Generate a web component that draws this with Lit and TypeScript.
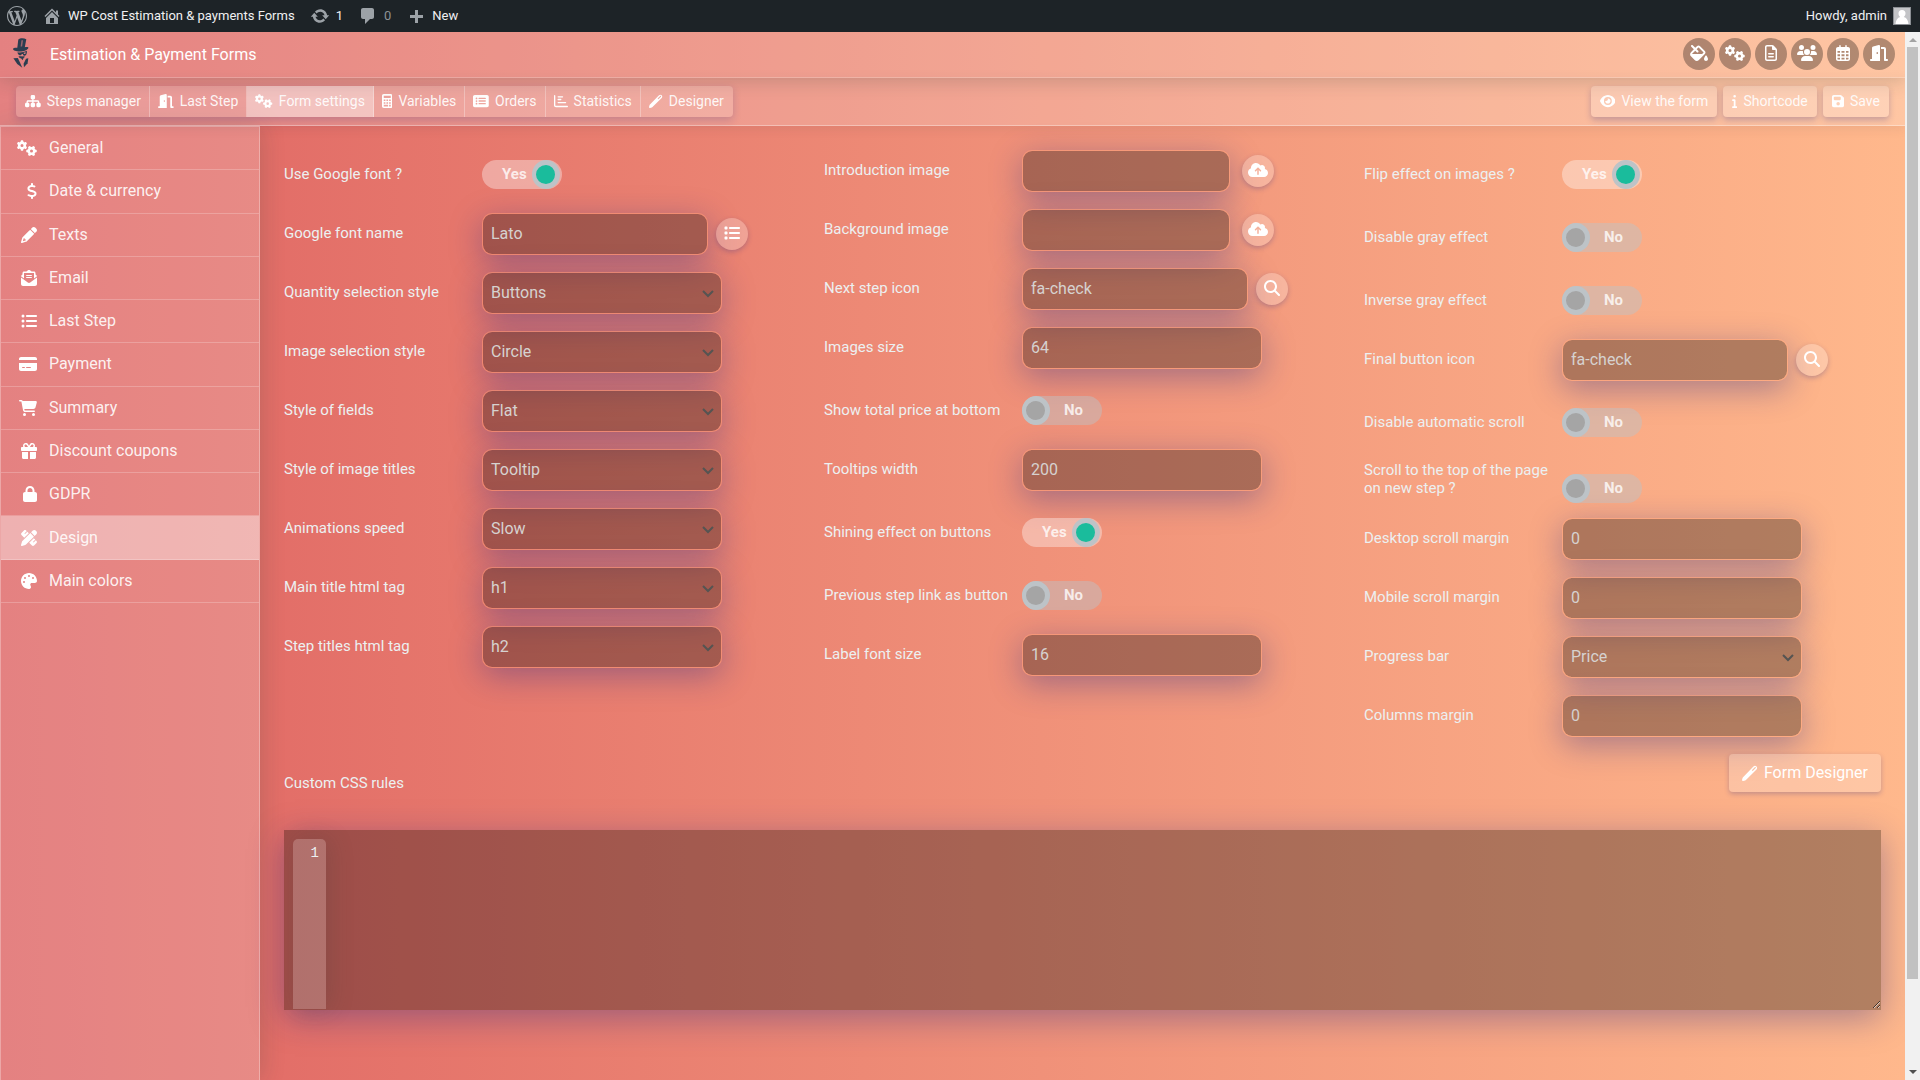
import { LitElement, html, svg, css, nothing } from "lit";
import { customElement, property } from "lit/decorators.js";
import { classMap } from "lit/directives/class-map.js";

interface Glyph {
  w: number;
  h?: number;
  d: string;
  evenOdd?: boolean;
}

const GEAR =
  "M308.5 135.3c7.1-6.3 9.9-16.2 6.2-25c-2.3-5.3-4.8-10.5-7.6-15.5L304 89.4c-3-5-6.3-9.9-9.8-14.6c-5.7-7.6-15.7-10.1-24.7-7.1l-28.2 9.3c-10.7-8.8-23-16-36.2-20.9L199 27.1c-1.9-9.3-9.1-16.7-18.5-17.8C173.9 8.4 167.2 8 160.4 8h-.7c-6.8 0-13.5 .4-20.1 1.2c-9.4 1.1-16.6 8.6-18.5 17.8L115 56.1c-13.3 5-25.5 12.1-36.2 20.9L50.5 67.8c-9-3-19-.5-24.7 7.1c-3.5 4.7-6.8 9.6-9.9 14.6l-3 5.3c-2.8 5-5.3 10.2-7.6 15.6c-3.7 8.7-.9 18.6 6.2 25l22.2 19.8C32.6 161.9 32 168.9 32 176s.6 14.1 1.7 20.9L11.5 216.7c-7.1 6.3-9.9 16.2-6.2 25c2.3 5.3 4.8 10.5 7.6 15.6l3 5.2c3 5.1 6.3 9.9 9.9 14.6c5.7 7.6 15.7 10.1 24.7 7.1l28.2-9.3c10.7 8.8 23 16 36.2 20.9l6.1 29.1c1.9 9.3 9.1 16.7 18.5 17.8c6.7 .8 13.5 1.2 20.4 1.2s13.7-.4 20.4-1.2c9.4-1.1 16.6-8.6 18.5-17.8l6.1-29.1c13.3-5 25.5-12.1 36.2-20.9l28.2 9.3c9 3 19 .5 24.7-7.1c3.5-4.7 6.8-9.5 9.8-14.6l3.1-5.4c2.8-5 5.3-10.2 7.6-15.5c3.7-8.7 .9-18.6-6.2-25l-22.2-19.8c1.1-6.8 1.7-13.8 1.7-20.9s-.6-14.1-1.7-20.9l22.2-19.8zM112 176a48 48 0 1 1 96 0 48 48 0 1 1 -96 0z";

const GLYPHS: Record<string, Glyph> = {
  gears: { w: 640, d: GEAR },
  sitemap: { w: 576, d: "M208 80c0-26.5 21.5-48 48-48h64c26.5 0 48 21.5 48 48v64c0 26.5-21.5 48-48 48h-8v40H464c30.9 0 56 25.1 56 56v32h8c26.5 0 48 21.5 48 48v64c0 26.5-21.5 48-48 48H464c-26.5 0-48-21.5-48-48V368c0-26.5 21.5-48 48-48h8V288c0-4.4-3.6-8-8-8H312v40h8c26.5 0 48 21.5 48 48v64c0 26.5-21.5 48-48 48H256c-26.5 0-48-21.5-48-48V368c0-26.5 21.5-48 48-48h8V280H112c-4.4 0-8 3.6-8 8v32h8c26.5 0 48 21.5 48 48v64c0 26.5-21.5 48-48 48H48c-26.5 0-48-21.5-48-48V368c0-26.5 21.5-48 48-48h8V288c0-30.9 25.1-56 56-56H264V192h-8c-26.5 0-48-21.5-48-48V80z" },
  door: { w: 576, d: "M320 32c0-9.9-4.5-19.2-12.3-25.2S289.8-1.4 280.2 1l-179.9 45C79 51.3 64 70.5 64 92.5V448H32c-17.7 0-32 14.3-32 32s14.3 32 32 32H96 288h32V480 32zM256 256c0 17.7-10.7 32-24 32s-24-14.3-24-32s10.7-32 24-32s24 14.3 24 32zm96-128h96V480c0 17.7 14.3 32 32 32h64c17.7 0 32-14.3 32-32s-14.3-32-32-32H512V128c0-35.3-28.7-64-64-64H352v64z" },
  calculator: { w: 384, evenOdd: true, d: "M64 0C28.7 0 0 28.7 0 64V448c0 35.3 28.7 64 64 64H320c35.3 0 64-28.7 64-64V64c0-35.3-28.7-64-64-64H64zM64 64H320V150H64zM64 200h60v60H64zM162 200h60v60h-60zM260 200h60v60h-60zM64 298h60v60H64zM162 298h60v60h-60zM260 298h60v60h-60zM64 396h158v60H64zM260 396h60v60h-60z" },
  rectList: { w: 576, d: "M0 96C0 60.7 28.7 32 64 32H512c35.3 0 64 28.7 64 64V416c0 35.3-28.7 64-64 64H64c-35.3 0-64-28.7-64-64V96zM128 288a32 32 0 1 0 0-64 32 32 0 1 0 0 64zm32-128a32 32 0 1 0 -64 0 32 32 0 1 0 64 0zM128 384a32 32 0 1 0 0-64 32 32 0 1 0 0 64zm96-248c-13.3 0-24 10.7-24 24s10.7 24 24 24H448c13.3 0 24-10.7 24-24s-10.7-24-24-24H224zm0 96c-13.3 0-24 10.7-24 24s10.7 24 24 24H448c13.3 0 24-10.7 24-24s-10.7-24-24-24H224zm0 96c-13.3 0-24 10.7-24 24s10.7 24 24 24H448c13.3 0 24-10.7 24-24s-10.7-24-24-24H224z" },
  chart: { w: 512, d: "M24 32c13.3 0 24 10.7 24 24V408c0 13.3 10.7 24 24 24H488c13.3 0 24 10.7 24 24s-10.7 24-24 24H72c-39.8 0-72-32.2-72-72V56C0 42.7 10.7 32 24 32zM128 104c0-13.3 10.7-24 24-24H312c13.3 0 24 10.7 24 24s-10.7 24-24 24H152c-13.3 0-24-10.7-24-24zm24 72H248c13.3 0 24 10.7 24 24s-10.7 24-24 24H152c-13.3 0-24-10.7-24-24s10.7-24 24-24zm0 112H424c13.3 0 24 10.7 24 24s-10.7 24-24 24H152c-13.3 0-24-10.7-24-24s10.7-24 24-24z" },
  pen: { w: 512, evenOdd: true, d: "M26 396L366 46c28-28 70-28 98 0s28 70 0 98L118 486c-28 12-62 22-86 24c-20 1-31-9-30-28c2-24 10-60 24-86zM314 166l28 28L438 98c8-8 8-20 0-28s-20-8-28 0Z" },
  dollar: { w: 320, d: "M160 0c17.7 0 32 14.3 32 32V67.7c1.6 .2 3.1 .4 4.7 .7c.4 .1 .7 .1 1.1 .2l48 8.8c17.4 3.2 28.9 19.9 25.7 37.2s-19.9 28.9-37.2 25.7l-47.5-8.7c-31.3-4.6-58.9-1.5-78.3 6.2s-27.2 18.3-29 28.1c-2 10.7-.5 16.7 1.2 20.4c1.8 3.9 5.5 8.3 12.8 13.2c16.3 10.7 41.3 17.7 73.7 26.3l2.9 .8c28.6 7.6 63.6 16.8 89.6 33.8c14.2 9.3 27.6 21.9 35.9 39.5c8.5 17.9 10.3 37.9 6.4 59.2c-6.9 38-33.1 63.4-65.6 76.7c-13.7 5.6-28.6 9.2-44.4 11V480c0 17.7-14.3 32-32 32s-32-14.3-32-32V445.1c-.4-.1-.9-.1-1.3-.2l-.2 0 0 0c-24.4-3.8-64.5-14.3-91.5-26.3c-16.1-7.2-23.4-26.1-16.2-42.2s26.1-23.4 42.2-16.2c20.9 9.3 55.3 18.5 75.2 21.6c31.9 4.7 58.2 2 76-5.3c16.9-6.9 24.6-16.9 26.8-28.9c1.9-10.6 .4-16.7-1.3-20.4c-1.9-4-5.6-8.4-13-13.3c-16.4-10.7-41.5-17.7-74-26.3l-2.8-.7 0 0C119.4 279.3 84.4 270 58.4 253c-14.2-9.3-27.5-22-35.8-39.6c-8.4-17.9-10.1-37.9-6.1-59.2C23.7 116 52.3 91.2 84.8 78.3c13.3-5.3 27.9-8.9 43.2-11V32c0-17.7 14.3-32 32-32z" },
  pencil: { w: 512, d: "M410.3 231l11.3-11.3-33.9-33.9-62.1-62.1L291.7 89.8l-11.3 11.3-22.6 22.6L58.6 322.9c-10.4 10.4-18 23.3-22.2 37.4L1 480.7c-2.5 8.4-.2 17.5 6.1 23.7s15.3 8.5 23.7 6.1l120.3-35.4c14.1-4.2 27-11.8 37.4-22.2L387.7 253.7 410.3 231zM160 399.4l-9.1 22.7c-4 3.1-8.5 5.4-13.3 6.9L59.4 452l23-78.1c1.4-4.9 3.8-9.4 6.9-13.3l22.7-9.1v32c0 8.8 7.2 16 16 16h32zM362.7 18.7L348.3 33.2 325.7 55.8 314.3 67.1l33.9 33.9 62.1 62.1 33.9 33.9 11.3-11.3 22.6-22.6 14.5-14.5c25-25 25-65.5 0-90.5L453.3 18.7c-25-25-65.5-25-90.5 0z" },
  mail: { w: 512, d: "M215.4 96H144 107.8 96v8.8V144v40.4 89L.2 202.5c1.6-18.1 10.9-34.9 25.7-45.8L48 140.3V96c0-26.5 21.5-48 48-48h76.6l49.9-36.9C232.2 3.9 243.9 0 256 0s23.8 3.9 33.5 11L339.4 48H416c26.5 0 48 21.5 48 48v44.3l22.1 16.4c14.8 10.9 24.1 27.7 25.7 45.8L416 273.4v-89V144 104.8 96H404.2 368 296.6 215.4zM0 448V242.1L217.6 403.3c11.1 8.2 24.6 12.7 38.4 12.7s27.3-4.4 38.4-12.7L512 242.1V448c0 35.3-28.7 64-64 64H64c-35.3 0-64-28.7-64-64zM176 160H336c8.8 0 16 7.2 16 16s-7.2 16-16 16H176c-8.8 0-16-7.2-16-16s7.2-16 16-16zm0 64H336c8.8 0 16 7.2 16 16s-7.2 16-16 16H176c-8.8 0-16-7.2-16-16s7.2-16 16-16z" },
  listUl: { w: 512, d: "M64 144a48 48 0 1 0 0-96 48 48 0 1 0 0 96zM192 64c-17.7 0-32 14.3-32 32s14.3 32 32 32H480c17.7 0 32-14.3 32-32s-14.3-32-32-32H192zm0 160c-17.7 0-32 14.3-32 32s14.3 32 32 32H480c17.7 0 32-14.3 32-32s-14.3-32-32-32H192zm0 160c-17.7 0-32 14.3-32 32s14.3 32 32 32H480c17.7 0 32-14.3 32-32s-14.3-32-32-32H192zM64 464a48 48 0 1 0 0-96 48 48 0 1 0 0 96zm48-208a48 48 0 1 0 -96 0 48 48 0 1 0 96 0z" },
  list: { w: 512, d: "M40 48C26.7 48 16 58.7 16 72v48c0 13.3 10.7 24 24 24H88c13.3 0 24-10.7 24-24V72c0-13.3-10.7-24-24-24H40zM192 64c-17.7 0-32 14.3-32 32s14.3 32 32 32H480c17.7 0 32-14.3 32-32s-14.3-32-32-32H192zm0 160c-17.7 0-32 14.3-32 32s14.3 32 32 32H480c17.7 0 32-14.3 32-32s-14.3-32-32-32H192zm0 160c-17.7 0-32 14.3-32 32s14.3 32 32 32H480c17.7 0 32-14.3 32-32s-14.3-32-32-32H192zM16 232v48c0 13.3 10.7 24 24 24H88c13.3 0 24-10.7 24-24V232c0-13.3-10.7-24-24-24H40c-13.3 0-24 10.7-24 24zM40 368c-13.3 0-24 10.7-24 24v48c0 13.3 10.7 24 24 24H88c13.3 0 24-10.7 24-24V392c0-13.3-10.7-24-24-24H40z" },
  card: { w: 576, d: "M64 32C28.7 32 0 60.7 0 96v32H576V96c0-35.3-28.7-64-64-64H64zM576 224H0V416c0 35.3 28.7 64 64 64H512c35.3 0 64-28.7 64-64V224zM112 352h64c8.8 0 16 7.2 16 16s-7.2 16-16 16H112c-8.8 0-16-7.2-16-16s7.2-16 16-16zm112 16c0-8.8 7.2-16 16-16H368c8.8 0 16 7.2 16 16s-7.2 16-16 16H240c-8.8 0-16-7.2-16-16z" },
  cart: { w: 576, d: "M0 24C0 10.7 10.7 0 24 0H69.5c22 0 41.5 12.8 50.6 32h411c26.3 0 45.5 25 38.6 50.4l-41 152.3c-8.5 31.4-37 53.3-69.5 53.3H170.7l5.4 28.5c2.2 11.3 12.1 19.5 23.6 19.5H488c13.3 0 24 10.7 24 24s-10.7 24-24 24H199.7c-34.6 0-64.3-24.6-70.7-58.5L77.4 54.5c-.7-3.8-4-6.5-7.9-6.5H24C10.7 48 0 37.3 0 24zM128 464a48 48 0 1 1 96 0 48 48 0 1 1 -96 0zm336-48a48 48 0 1 1 0 96 48 48 0 1 1 0-96z" },
  gift: { w: 512, d: "M190.5 68.8L225.3 128H224 152c-22.1 0-40-17.9-40-40s17.9-40 40-40h2.2c14.9 0 28.8 7.9 36.3 20.8zM64 88c0 14.4 3.5 28 9.6 40H32c-17.7 0-32 14.3-32 32v64c0 17.7 14.3 32 32 32H480c17.7 0 32-14.3 32-32V160c0-17.7-14.3-32-32-32H438.4c6.1-12 9.6-25.6 9.6-40c0-48.6-39.4-88-88-88h-2.2c-31.9 0-61.5 16.9-77.7 44.4L256 85.5l-24.1-41C215.7 16.9 186.1 0 154.2 0H152C103.4 0 64 39.4 64 88zm336 0c0 22.1-17.9 40-40 40H288h-1.3l34.8-59.2C329.1 55.9 342.9 48 357.8 48H360c22.1 0 40 17.9 40 40zM32 288V464c0 26.5 21.5 48 48 48H224V288H32zM288 512H432c26.5 0 48-21.5 48-48V288H288V512z" },
  lock: { w: 448, d: "M144 144v48H304V144c0-44.2-35.8-80-80-80s-80 35.8-80 80zM80 192V144C80 64.5 144.5 0 224 0s144 64.5 144 144v48h16c35.3 0 64 28.7 64 64V448c0 35.3-28.7 64-64 64H64c-35.3 0-64-28.7-64-64V256c0-35.3 28.7-64 64-64H80z" },
  penRuler: { w: 512, d: "M469.3 19.3l23.4 23.4c25 25 25 65.5 0 90.5l-56.4 56.4L322.3 75.7l56.4-56.4c25-25 65.5-25 90.5 0zM44.9 353.2L299.7 98.3 413.7 212.3 158.8 467.1c-6.7 6.7-15.1 11.6-24.2 14.2l-104 29.7c-8.4 2.4-17.4 .1-23.6-6.1s-8.5-15.2-6.1-23.6l29.7-104c2.6-9.2 7.5-17.5 14.2-24.2zM249.4 103.4L103.4 249.4 16 161.9c-18.7-18.7-18.7-49.1 0-67.9L94.1 16c18.7-18.7 49.1-18.7 67.9 0l19.8 19.8c-.3 .3-.7 .6-1 .9l-64 64c-6.2 6.2-6.2 16.4 0 22.6s16.4 6.2 22.6 0l64-64c.3-.3 .6-.7 .9-1l45.1 45.1zM408.6 262.6l45.1 45.1c-.3 .3-.7 .6-1 .9l-64 64c-6.2 6.2-6.2 16.4 0 22.6s16.4 6.2 22.6 0l64-64c.3-.3 .6-.7 .9-1L496 350.1c18.7 18.7 18.7 49.1 0 67.9L417.9 496c-18.7 18.7-49.1 18.7-67.9 0l-87.4-87.4L408.6 262.6z" },
  palette: { w: 512, d: "M512 256c0 .9 0 1.8 0 2.7c-.4 36.5-33.6 61.3-70.1 61.3H344c-26.5 0-48 21.5-48 48c0 3.4 .4 6.7 1 9.9c2.1 10.2 6.5 20 10.8 29.9c6.1 13.8 12.1 27.5 12.1 42c0 31.8-21.6 60.7-53.4 62c-3.5 .1-7 .2-10.6 .2C114.6 512 0 397.4 0 256S114.6 0 256 0S512 114.6 512 256zM128 288a32 32 0 1 0 -64 0 32 32 0 1 0 64 0zm0-96a32 32 0 1 0 0-64 32 32 0 1 0 0 64zM288 96a32 32 0 1 0 -64 0 32 32 0 1 0 64 0zm96 96a32 32 0 1 0 0-64 32 32 0 1 0 0 64z" },
  eye: { w: 576, d: "M288 32c-80.8 0-145.5 36.8-192.6 80.6C48.6 156 17.3 208 2.5 243.7c-3.3 7.9-3.3 16.7 0 24.6C17.3 304 48.6 356 95.4 399.4C142.5 443.2 207.2 480 288 480s145.5-36.8 192.6-80.6c46.8-43.5 78.1-95.4 93-131.1c3.3-7.9 3.3-16.7 0-24.6c-14.9-35.7-46.2-87.7-93-131.1C433.5 68.8 368.8 32 288 32zM144 256a144 144 0 1 1 288 0 144 144 0 1 1 -288 0zm144-64c0 35.3-28.7 64-64 64c-7.1 0-13.9-1.2-20.3-3.3c-5.5-1.8-11.9 1.6-11.7 7.4c.3 6.9 1.3 13.8 3.2 20.7c13.7 51.2 66.4 81.6 117.6 67.9s81.6-66.4 67.9-117.6c-11.1-41.5-47.8-69.4-88.6-71.1c-5.8-.2-9.2 6.1-7.4 11.7c2.1 6.4 3.3 13.2 3.3 20.3z" },
  info: { w: 192, d: "M48 80a48 48 0 1 1 96 0A48 48 0 1 1 48 80zM0 224c0-17.7 14.3-32 32-32H96c17.7 0 32 14.3 32 32V448h32c17.7 0 32 14.3 32 32s-14.3 32-32 32H32c-17.7 0-32-14.3-32-32s14.3-32 32-32H64V256H32c-17.7 0-32-14.3-32-32z" },
  save: { w: 448, d: "M64 32C28.7 32 0 60.7 0 96V416c0 35.3 28.7 64 64 64H384c35.3 0 64-28.7 64-64V173.3c0-17-6.7-33.3-18.7-45.3L352 50.7C340 38.7 323.7 32 306.7 32H64zm0 96c0-17.7 14.3-32 32-32H288c17.7 0 32 14.3 32 32v64c0 17.7-14.3 32-32 32H96c-17.7 0-32-14.3-32-32V128zM224 288a64 64 0 1 1 0 128 64 64 0 1 1 0-128z" },
  search: { w: 512, d: "M416 208c0 45.9-14.9 88.3-40 122.7L502.6 457.4c12.5 12.5 12.5 32.8 0 45.3s-32.8 12.5-45.3 0L330.7 376c-34.4 25.2-76.8 40-122.7 40C93.1 416 0 322.9 0 208S93.1 0 208 0S416 93.1 416 208zM208 352a144 144 0 1 0 0-288 144 144 0 1 0 0 288z" },
  cloud: { w: 640, d: "M144 480C64.5 480 0 415.5 0 336c0-62.8 40.2-116.2 96.2-135.9c-.1-2.7-.2-5.4-.2-8.1c0-88.4 71.6-160 160-160c59.3 0 111 32.2 138.7 80.2C409.9 102 428.3 96 448 96c53 0 96 43 96 96c0 12.2-2.3 23.8-6.4 34.6C596 238.4 640 290.1 640 352c0 70.7-57.3 128-128 128H144zm79-217c-9.4 9.4-9.4 24.6 0 33.9s24.6 9.4 33.9 0l39-39V392c0 13.3 10.7 24 24 24s24-10.7 24-24V257.9l39 39c9.4 9.4 24.6 9.4 33.9 0s9.4-24.6 0-33.9l-80-80c-9.4-9.4-24.6-9.4-33.9 0l-80 80z" },
  fill: { w: 576, d: "M41.4 9.4C53.9-3.1 74.1-3.1 86.6 9.4L168 90.7l53.1-53.1c28.1-28.1 73.7-28.1 101.8 0L474.3 189.1c28.1 28.1 28.1 73.7 0 101.8L283.9 481.4c-37.5 37.5-98.3 37.5-135.8 0L30.6 363.9c-37.5-37.5-37.5-98.3 0-135.8L122.7 136 41.4 54.6c-12.5-12.5-12.5-32.8 0-45.3zm176 221.3L168 181.3 75.9 273.4c-4.2 4.2-7 9.3-8.4 14.6H386.7l42.3-42.3c3.1-3.1 3.1-8.2 0-11.3L277.7 82.9c-3.1-3.1-8.2-3.1-11.3 0L213.3 136l49.4 49.4c12.5 12.5 12.5 32.8 0 45.3s-32.8 12.5-45.3 0zM512 512c-35.3 0-64-28.7-64-64c0-25.2 32.6-79.6 51.2-108.7c6-9.4 19.5-9.4 25.5 0C543.4 368.4 576 422.8 576 448c0 35.3-28.7 64-64 64z" },
  file: { w: 384, d: "M64 464c-8.8 0-16-7.2-16-16V64c0-8.8 7.2-16 16-16H224v80c0 17.7 14.3 32 32 32h80V448c0 8.8-7.2 16-16 16H64zM64 0C28.7 0 0 28.7 0 64V448c0 35.3 28.7 64 64 64H320c35.3 0 64-28.7 64-64V154.5c0-17-6.7-33.3-18.7-45.3L274.7 18.7C262.7 6.7 246.5 0 229.5 0H64zm56 256c-13.3 0-24 10.7-24 24s10.7 24 24 24H264c13.3 0 24-10.7 24-24s-10.7-24-24-24H120zm0 96c-13.3 0-24 10.7-24 24s10.7 24 24 24H264c13.3 0 24-10.7 24-24s-10.7-24-24-24H120z" },
  users: { w: 640, d: "M144 0a80 80 0 1 1 0 160A80 80 0 1 1 144 0zM512 0a80 80 0 1 1 0 160A80 80 0 1 1 512 0zM0 298.7C0 239.8 47.8 192 106.7 192h42.7c15.9 0 31 3.5 44.6 9.7c-1.3 7.2-1.9 14.7-1.9 22.3c0 38.2 16.8 72.5 43.3 96c-.2 0-.4 0-.7 0H21.3C9.6 320 0 310.4 0 298.7zM405.3 320c-.2 0-.4 0-.7 0c26.6-23.5 43.3-57.8 43.3-96c0-7.6-.7-15-1.9-22.3c13.6-6.3 28.7-9.7 44.6-9.7h42.7C592.2 192 640 239.8 640 298.7c0 11.8-9.6 21.3-21.3 21.3H405.3zM224 224a96 96 0 1 1 192 0 96 96 0 1 1 -192 0zM128 485.3C128 411.7 187.7 352 261.3 352H378.7C452.3 352 512 411.7 512 485.3c0 14.7-11.9 26.7-26.7 26.7H154.7c-14.7 0-26.7-11.9-26.7-26.7z" },
  calendar: { w: 448, evenOdd: true, d: "M128 0c13.3 0 24 10.7 24 24V64H296V24c0-13.3 10.7-24 24-24s24 10.7 24 24V64h40c35.3 0 64 28.7 64 64V448c0 35.3-28.7 64-64 64H64c-35.3 0-64-28.7-64-64V128C0 92.7 28.7 64 64 64h40V24c0-13.3 10.7-24 24-24zM48 192h80v56H48zM176 192h96v56h-96zM320 192h80v56h-80zM48 296h80v64H48zM176 296h96v64h-96zM320 296h80v64h-80zM48 408h80v56H64c-8.800 0-16-7.200-16-16zM176 408h96v56h-96zM320 408h80v40c0 8.800-7.200 16-16 16h-64z" },
  wordpress: { w: 20, h: 20, d: "M20 10c0-5.51-4.49-10-10-10C4.48 0 0 4.49 0 10c0 5.52 4.48 10 10 10 5.51 0 10-4.48 10-10zM7.78 15.37L4.37 6.22c.55-.02 1.17-.08 1.17-.08.5-.06.44-1.13-.06-1.11 0 0-1.45.11-2.37.11-.18 0-.37 0-.58-.01C4.12 2.69 6.87 1.11 10 1.11c2.33 0 4.45.87 6.05 2.34-.68-.11-1.65.39-1.65 1.58 0 .74.45 1.36.9 2.1.35.61.55 1.36.55 2.46 0 1.49-1.4 5-1.4 5l-3.03-8.37c.54-.02.82-.17.82-.17.5-.05.44-1.25-.06-1.22 0 0-1.44.12-2.38.12-.87 0-2.33-.12-2.33-.12-.5-.03-.56 1.2-.06 1.22l.92.08 1.26 3.41zM17.41 10c.24-.64.74-1.87.43-4.25.7 1.29 1.05 2.71 1.05 4.25 0 3.29-1.73 6.24-4.4 7.78.97-2.59 1.94-5.2 2.92-7.78zM6.1 18.09C3.12 16.65 1.11 13.53 1.11 10c0-1.3.23-2.48.72-3.59C3.25 10.3 4.67 14.2 6.1 18.09zm4.03-6.63l2.58 6.98c-.86.29-1.76.45-2.71.45-.79 0-1.57-.11-2.29-.33.81-2.38 1.62-4.74 2.42-7.1z" },
  home: { w: 20, h: 20, d: "M16 8.5l1.53 1.53-1.06 1.06L10 4.6l-6.47 6.49-1.06-1.06L10 2.5l4 4v-2h2v4zm-6-2.46l6 5.99V18H4v-5.97zM12 17v-5H8v5h4z" },
  update: { w: 20, h: 20, d: "M10.2 3.28c3.53 0 6.43 2.61 6.92 6h2.08l-3.5 4-3.5-4h2.32c-.45-1.97-2.21-3.45-4.32-3.45-1.45 0-2.73.71-3.54 1.78L4.95 5.66C6.23 4.2 8.11 3.28 10.2 3.28zm-.4 13.44c-3.52 0-6.43-2.61-6.92-6H.8l3.5-4c1.17 1.33 2.33 2.67 3.5 4H5.48c.45 1.97 2.21 3.45 4.32 3.45 1.45 0 2.73-.71 3.54-1.78l1.71 1.95c-1.28 1.46-3.15 2.38-5.25 2.38z" },
  comment: { w: 20, h: 20, d: "M5 2h9c1.1 0 2 .9 2 2v7c0 1.1-.9 2-2 2h-2l-5 5v-5H5c-1.1 0-2-.9-2-2V4c0-1.1.9-2 2-2z" },
  plus: { w: 20, h: 20, d: "M17 9v3h-5v5H9v-5H4V9h5V4h3v5z" },
};

const icon = (name: string, size: number) => {
  const g = GLYPHS[name];
  const h = g.h ?? 512;
  return html`<svg
    class="icon"
    aria-hidden="true"
    width=${(g.w / h) * size}
    height=${size}
    viewBox="0 0 ${g.w} ${h}"
    fill="currentColor"
  >
    <path fill-rule=${g.evenOdd ? "evenodd" : "nonzero"} d=${g.d}></path>
    ${name === "gears"
      ? svg`<path transform="translate(464 352) rotate(90) translate(-160 -176)" d=${GEAR}></path>`
      : nothing}
  </svg>`;
};

type Field =
  | { kind: "switch"; label: string; on: boolean; tall?: boolean }
  | { kind: "select"; label: string; value: string }
  | { kind: "text"; label: string; value: string; button?: string; action?: string };

const sw = (label: string, on: boolean, tall = false): Field => ({ kind: "switch", label, on, tall });
const sel = (label: string, value: string): Field => ({ kind: "select", label, value });
const txt = (label: string, value: string, button?: string, action?: string): Field => ({
  kind: "text",
  label,
  value,
  button,
  action,
});

const COLUMNS: Field[][] = [
  [
    sw("Use Google font ?", true),
    txt("Google font name", "Lato", "list", "Choose a font"),
    sel("Quantity selection style", "Buttons"),
    sel("Image selection style", "Circle"),
    sel("Style of fields", "Flat"),
    sel("Style of image titles", "Tooltip"),
    sel("Animations speed", "Slow"),
    sel("Main title html tag", "h1"),
    sel("Step titles html tag", "h2"),
  ],
  [
    txt("Introduction image", "", "cloud", "Upload an image"),
    txt("Background image", "", "cloud", "Upload an image"),
    txt("Next step icon", "fa-check", "search", "Find an icon"),
    txt("Images size", "64"),
    sw("Show total price at bottom", false),
    txt("Tooltips width", "200"),
    sw("Shining effect on buttons", true),
    sw("Previous step link as button", false),
    txt("Label font size", "16"),
  ],
  [
    sw("Flip effect on images ?", true),
    sw("Disable gray effect", false),
    sw("Inverse gray effect", false),
    txt("Final button icon", "fa-check", "search", "Find an icon"),
    sw("Disable automatic scroll", false),
    sw("Scroll to the top of the page on new step ?", false, true),
    txt("Desktop scroll margin", "0"),
    txt("Mobile scroll margin", "0"),
    sel("Progress bar", "Price"),
    txt("Columns margin", "0"),
  ],
];

const shared = css`
  * {
    box-sizing: border-box;
  }
  .icon {
    display: block;
    flex: none;
  }
  button,
  input,
  select,
  textarea {
    font: inherit;
    color: inherit;
    margin: 0;
    border: 0;
    outline: 0;
  }
  a {
    color: inherit;
    text-decoration: none;
  }
`;

@customElement("admin-bar")
export class AdminBar extends LitElement {
  static styles = [
    shared,
    css`
      :host {
        display: flex;
        align-items: center;
        justify-content: space-between;
        height: 32px;
        padding: 0 9px 0 7px;
        background: #1d2327;
        color: #f0f0f1;
        font-size: 13px;
        line-height: 20px;
      }
      .menu {
        display: flex;
        gap: 15px;
      }
      .entry {
        display: flex;
        align-items: center;
        gap: 6px;
      }
      .entry .icon {
        color: #9ca2a7;
      }
      .muted {
        color: #8c9196;
      }
      .avatar {
        display: block;
        border: 1px solid #8c8f94;
        background: #c3c4c7;
      }
    `,
  ];

  render() {
    return html`
      <nav class="menu">
        <a class="entry" href="#" aria-label="About WordPress">${icon("wordpress", 20)}</a>
        <a class="entry" href="#">${icon("home", 20)}<span>WP Cost Estimation &amp; payments Forms</span></a>
        <a class="entry" href="#">${icon("update", 20)}<span>1</span></a>
        <a class="entry" href="#">${icon("comment", 20)}<span class="muted">0</span></a>
        <a class="entry" href="#">${icon("plus", 20)}<span>New</span></a>
      </nav>
      <a class="entry" href="#">
        <span>Howdy, admin</span>
        <svg class="avatar" width="18" height="18" viewBox="0 0 16 16" aria-hidden="true">
          <path fill="#fff" d="M8 2a3.500 3.500 0 0 1 3.500 3.500C11.500 7 10.800 8.300 9.800 9c2.700.7 4.200 3 4.700 7h-13C2 12 3.500 9.700 6.200 9 5.200 8.300 4.500 7 4.500 5.500A3.500 3.500 0 0 1 8 2z"></path>
        </svg>
      </a>
    `;
  }
}

@customElement("form-field")
export class FormField extends LitElement {
  @property({ attribute: false }) field!: Field;

  static styles = [
    shared,
    css`
      :host {
        display: flow-root;
      }
      .row {
        display: grid;
        grid-template-columns: 188px 1fr;
        column-gap: 10px;
        align-items: center;
        height: 42px;
        margin-bottom: 17px;
      }
      .row.toggle {
        height: 29px;
        margin: 10px 0 24px;
      }
      .row.tall {
        height: 42px;
        margin: 0 0 15px;
        align-items: end;
      }
      .label {
        font-size: 15px;
        line-height: 18px;
        color: #ecf0f1;
        padding-bottom: 2px;
      }
      .row.tall .label {
        align-self: start;
        padding: 0;
      }
      .control {
        display: flex;
        align-items: center;
        gap: 8px;
      }
      .control.upload {
        gap: 12px;
      }
      .box {
        width: 240px;
        height: 42px;
        padding: 0 8px 2px;
        border: 1px solid rgba(255, 160, 120, 0.4);
        border-radius: 10px;
        background: rgba(0, 0, 0, 0.3);
        background-clip: padding-box;
        box-shadow: 0 8px 32px rgba(31, 38, 135, 0.37);
        font-size: 16px;
        color: #d6d2d0;
        appearance: none;
      }
      .box.paired {
        width: 226px;
      }
      .upload .box.paired {
        width: 208px;
      }
      .pick {
        position: relative;
      }
      .chevron {
        position: absolute;
        right: 8px;
        top: 18px;
        pointer-events: none;
      }
      .round {
        display: flex;
        align-items: center;
        justify-content: center;
        width: 32px;
        height: 32px;
        padding: 0 0 2px;
        border-radius: 50%;
        background: rgba(255, 255, 255, 0.25);
        box-shadow: 0 2px 5px rgba(31, 38, 135, 0.25);
        color: #fff;
      }
      .switch {
        position: relative;
        display: flex;
        align-items: center;
        justify-content: space-between;
        width: 80px;
        height: 29px;
        padding: 0 19px 0 0;
        border-radius: 15px;
        background: rgba(189, 195, 199, 0.45);
        color: rgba(255, 255, 255, 0.8);
        font-size: 15px;
        font-weight: 700;
        line-height: 18px;
      }
      .switch.on {
        flex-direction: row-reverse;
        padding: 0 2px 0 20px;
        background: rgba(255, 255, 255, 0.36);
      }
      .switch .state {
        padding-bottom: 2px;
      }
      .switch input {
        position: absolute;
        inset: 0;
        width: 100%;
        height: 100%;
        opacity: 0;
      }
      .knob {
        width: 28px;
        height: 29px;
        border: 5px solid #bdc3c7;
        border-left-width: 4px;
        border-radius: 50%;
        background: #a5a5a5;
      }
      .switch.on .knob {
        background: #1abc9c;
      }
    `,
  ];

  private control(f: Field) {
    if (f.kind === "switch") {
      return html`<span class=${classMap({ switch: true, on: f.on })}>
        <span class="knob"></span>
        <span class="state">${f.on ? "Yes" : "No"}</span>
        <input id="control" type="checkbox" role="switch" .checked=${f.on} />
      </span>`;
    }
    if (f.kind === "select") {
      return html`<span class="pick">
        <select class="box" id="control">
          <option selected>${f.value}</option>
        </select>
        <svg class="chevron" width="12" height="8" viewBox="0 0 12 8" aria-hidden="true">
          <path d="M1 1l5 5 5-5" fill="none" stroke="#555452" stroke-width="2"></path>
        </svg>
      </span>`;
    }
    return html`<input
        id="control"
        type="text"
        class=${classMap({ box: true, paired: !!f.button })}
        .value=${f.value}
      />${f.button
        ? html`<button class="round" type="button" aria-label=${f.action}>${icon(f.button, 16)}</button>`
        : nothing}`;
  }

  render() {
    const f = this.field;
    const toggle = f.kind === "switch";
    const tall = f.kind === "switch" && !!f.tall;
    return html`<div class=${classMap({ row: true, toggle, tall })}>
      <label class="label" for="control">${f.label}</label>
      <div class=${classMap({ control: true, upload: f.kind === "text" && f.button === "cloud" })}>
        ${this.control(f)}
      </div>
    </div>`;
  }
}

@customElement("app-root")
export class AppRoot extends LitElement {
  static styles = [
    shared,
    css`
      :host {
        display: flex;
        flex-direction: column;
        height: 100vh;
        overflow: hidden;
        font-family: Roboto, "Liberation Sans", sans-serif;
        color: #fff;
      }
      .viewport {
        flex: 1;
        display: flex;
        min-height: 0;
      }
      .panel {
        flex: 1;
        min-width: 0;
        display: flex;
        flex-direction: column;
        overflow: hidden;
        background: linear-gradient(to right, #de6262, #ffb88c);
      }
      .header {
        position: relative;
        z-index: 2;
        display: flex;
        align-items: center;
        height: 46px;
        padding: 0 10px 1px 11px;
        background: rgba(255, 255, 255, 0.2);
        border-bottom: 1px solid rgba(255, 255, 255, 0.22);
        box-shadow: 0 2px 20px rgba(31, 60, 50, 0.22);
      }
      .logo {
        display: block;
        margin-right: 20px;
      }
      .title {
        flex: 1;
        margin: 0;
        padding-top: 2px;
        font-size: 16px;
        font-weight: 400;
        line-height: 20px;
      }
      .shortcuts {
        display: flex;
        gap: 4px;
      }
      .shortcut {
        display: flex;
        align-items: center;
        justify-content: center;
        width: 32px;
        height: 32px;
        padding: 0 0 2px;
        border-radius: 50%;
        background: rgba(0, 0, 0, 0.3);
        color: #fff;
      }
      .toolbar {
        position: relative;
        z-index: 1;
        display: flex;
        align-items: center;
        justify-content: space-between;
        height: 48px;
        padding: 0 16px;
        background: rgba(255, 255, 255, 0.2);
        border-bottom: 1px solid rgba(255, 255, 255, 0.35);
        box-shadow: 0 2px 12px rgba(31, 38, 60, 0.08);
      }
      .tabs {
        display: flex;
        border-radius: 4px;
        box-shadow: 0 3px 8px rgba(31, 38, 135, 0.2);
      }
      .tab,
      .action {
        display: flex;
        align-items: center;
        gap: 6px;
        height: 31px;
        padding: 0 9px 1px;
        background: rgba(255, 255, 255, 0.18);
        font-size: 14px;
        line-height: 20px;
        color: rgba(255, 255, 255, 0.92);
      }
      .tab {
        padding: 0 8px 1px;
        border-right: 1px solid rgba(255, 255, 255, 0.3);
      }
      .tab:first-child {
        padding-left: 9px;
        border-radius: 4px 0 0 4px;
      }
      .tab:last-child {
        padding-right: 9px;
        border-right: 0;
        border-radius: 0 4px 4px 0;
      }
      .tab.active {
        background: rgba(255, 255, 255, 0.48);
      }
      .tab .icon,
      .action .icon {
        color: #fff;
      }
      .actions {
        display: flex;
        gap: 6px;
      }
      .action {
        border-radius: 4px;
        background: rgba(255, 255, 255, 0.22);
        box-shadow: 0 3px 6px rgba(31, 38, 135, 0.25);
      }
      .body {
        flex: 1;
        min-height: 0;
        display: flex;
      }
      .sidebar {
        flex: none;
        width: 260px;
        border: 1px solid rgba(255, 255, 255, 0.3);
        border-bottom: 0;
        background: rgba(255, 255, 255, 0.2);
        box-shadow: 0 0 24px rgba(31, 60, 50, 0.2);
      }
      .sections {
        display: grid;
        grid-auto-rows: 1fr;
        height: 476px;
      }
      .section {
        display: grid;
        grid-template-columns: 20px 1fr;
        column-gap: 12px;
        align-items: center;
        padding: 0 16px;
        border-bottom: 1px solid rgba(255, 255, 255, 0.22);
        font-size: 16px;
        line-height: 20px;
        color: rgba(255, 255, 255, 0.9);
      }
      .section .icon {
        justify-self: end;
        color: #fff;
      }
      .section.active {
        background: rgba(255, 255, 255, 0.38);
      }
      .main {
        flex: 1;
        min-width: 0;
        padding: 24px 1px 0 24px;
      }
      .columns {
        display: grid;
        grid-template-columns: repeat(3, 1fr);
      }
      .css-head {
        position: relative;
        display: flex;
        align-items: flex-start;
        justify-content: space-between;
        height: 76px;
        margin-right: 23px;
      }
      .css-label {
        padding-top: 20px;
        font-size: 15px;
        line-height: 18px;
        color: #ecf0f1;
      }
      .designer {
        display: flex;
        align-items: center;
        gap: 6px;
        height: 38px;
        padding: 0 13px 1px;
        border-radius: 4px;
        background: rgba(255, 255, 255, 0.22);
        box-shadow: 0 2px 5px rgba(31, 38, 135, 0.25);
        font-size: 16px;
        line-height: 20px;
      }
      .editor {
        display: flex;
        height: 180px;
        margin-right: 23px;
        padding: 9px 0 1px 9px;
        background: rgba(0, 0, 0, 0.3);
        box-shadow: 0 8px 32px rgba(31, 38, 135, 0.37);
      }
      .gutter {
        width: 33px;
        padding: 5px 7px 0 0;
        border-radius: 5px 5px 0 0;
        background: rgba(255, 255, 255, 0.2);
        box-shadow: 4px 0 24px rgba(60, 60, 60, 0.2);
        font-family: "Liberation Mono", monospace;
        font-size: 14px;
        line-height: 18px;
        text-align: right;
        color: #ecf0f1;
      }
      .code {
        flex: 1;
        padding: 5px 4px;
        background: transparent;
        font-family: "Liberation Mono", monospace;
        font-size: 14px;
        line-height: 18px;
        resize: vertical;
      }
      .scrollbar {
        flex: none;
        display: flex;
        flex-direction: column;
        align-items: center;
        width: 15px;
        padding: 6px 0 6px;
        background: #f1f1f1;
      }
      .arrow {
        display: block;
      }
      .thumb {
        width: 11px;
        height: 90%;
        margin: 5px 0 auto;
        background: #c1c1c1;
      }
    `,
  ];

  private tabs = [
    ["sitemap", "Steps manager"],
    ["door", "Last Step"],
    ["gears", "Form settings"],
    ["calculator", "Variables"],
    ["rectList", "Orders"],
    ["chart", "Statistics"],
    ["pen", "Designer"],
  ];

  private actions = [
    ["eye", "View the form"],
    ["info", "Shortcode"],
    ["save", "Save"],
  ];

  private shortcuts = [
    ["fill", "Theme"],
    ["gears", "Settings"],
    ["file", "Forms"],
    ["users", "Customers"],
    ["calendar", "Calendars"],
    ["door", "Exit"],
  ];

  private sections = [
    ["gears", "General"],
    ["dollar", "Date & currency"],
    ["pencil", "Texts"],
    ["mail", "Email"],
    ["listUl", "Last Step"],
    ["card", "Payment"],
    ["cart", "Summary"],
    ["gift", "Discount coupons"],
    ["lock", "GDPR"],
    ["penRuler", "Design"],
    ["palette", "Main colors"],
  ];

  private logo() {
    return html`<svg class="logo" width="19" height="32" viewBox="0 0 19 32" fill="#2c3e50" aria-hidden="true">
      <path d="M7.300 1.500C9 0 13 0 15.300 1.300L13.800 9.200c1.500-.2 2.800-.2 3.600.2.300 1.500-3 3.500-7.200 4C6 13.700 2.200 12.800 2 11c0-.9 1.800-1.300 4.300-1.200z"></path>
      <path d="M6.500 14.200c2.500.6 6 .2 9.300-1.400.4 2-.2 4.400-1.800 5-1.200.3-2-.8-2.200-1.800h-1c-.2 1-1.300 1.600-2.300 1.200-1.200-.5-1.900-1.600-2-3z"></path>
      <path d="M7.500 18.500c1.200-.5 2.600-.5 3.600 0 1-.5 2.100-.4 3 .2l-1.500 1.400-1 2.200-1.600-2c-1 0-1.900-.8-2.500-1.800z"></path>
      <path d="M2.400 20.300l4.400-.4 2.200 4.500 2.300 5.300L6.200 26z"></path>
      <path d="M17.300 20.300l-.7 5-3.600 4-.4-3.500 2.400-5z"></path>
      <path d="M10.500 2.300l1.500-.1-.9 6.300-1.500.1z" fill="#e58283" opacity=".6"></path>
      <path d="M12.700 14.800l2-.6-.2 1.500-1.600.3z" fill="#e58283"></path>
    </svg>`;
  }

  render() {
    return html`
      <admin-bar></admin-bar>
      <div class="viewport">
        <div class="panel">
          <header class="header">
            ${this.logo()}
            <h1 class="title">Estimation &amp; Payment Forms</h1>
            <div class="shortcuts">
              ${this.shortcuts.map(
                ([name, label]) =>
                  html`<button class="shortcut" type="button" aria-label=${label}>${icon(name, 16)}</button>`
              )}
            </div>
          </header>
          <div class="toolbar">
            <nav class="tabs">
              ${this.tabs.map(
                ([name, label]) => html`<a
                  class=${classMap({ tab: true, active: label === "Form settings" })}
                  href="#"
                  >${icon(name, 14)}<span>${label}</span></a
                >`
              )}
            </nav>
            <div class="actions">
              ${this.actions.map(
                ([name, label]) =>
                  html`<button class="action" type="button">${icon(name, 14)}<span>${label}</span></button>`
              )}
            </div>
          </div>
          <div class="body">
            <aside class="sidebar">
              <nav class="sections">
                ${this.sections.map(
                  ([name, label]) => html`<a
                    class=${classMap({ section: true, active: label === "Design" })}
                    href="#"
                    >${icon(name, 16)}<span>${label}</span></a
                  >`
                )}
              </nav>
            </aside>
            <main class="main">
              <form class="columns">
                ${COLUMNS.map(
                  (col) => html`<div>${col.map((f) => html`<form-field .field=${f}></form-field>`)}</div>`
                )}
              </form>
              <div class="css-head">
                <label class="css-label" for="css">Custom CSS rules</label>
                <button class="designer" type="button">${icon("pen", 16)}<span>Form Designer</span></button>
              </div>
              <div class="editor">
                <div class="gutter">1</div>
                <textarea class="code" id="css" spellcheck="false"></textarea>
              </div>
            </main>
          </div>
        </div>
        <div class="scrollbar" aria-hidden="true">
          <svg class="arrow" width="8" height="4" viewBox="0 0 8 4"><path d="M0 4l4-4 4 4z" fill="#a3a3a3"></path></svg>
          <div class="thumb"></div>
          <svg class="arrow" width="8" height="4" viewBox="0 0 8 4"><path d="M0 0l4 4 4-4z" fill="#505050"></path></svg>
        </div>
      </div>
    `;
  }
}
